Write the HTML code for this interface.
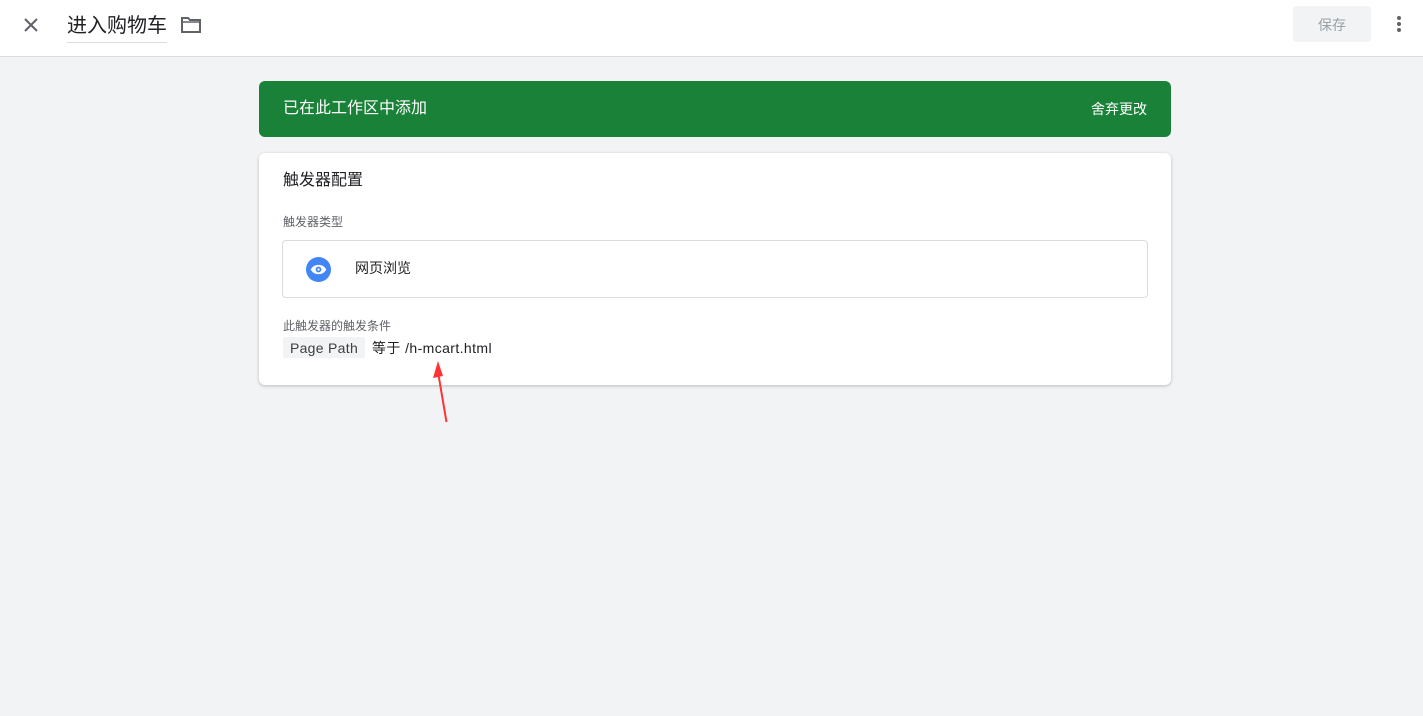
<!DOCTYPE html>
<html><head><meta charset="utf-8"><style>
*{margin:0;padding:0;box-sizing:border-box}
body{width:1423px;height:716px;background:#f1f3f4;font-family:"Liberation Sans","Noto Sans CJK SC",sans-serif;position:relative;overflow:hidden;color:#202124}
.top{position:absolute;left:0;top:0;width:1423px;height:57px;background:#fff;border-bottom:1px solid #dadce0}
.abs{position:absolute}
.banner{position:absolute;left:259px;top:81px;width:912px;height:56px;background:#1a8138;border-radius:6px;color:#fff}
.card{position:absolute;left:259px;top:153px;width:912px;height:232px;background:#fff;border-radius:6px;box-shadow:0 1px 3px rgba(60,64,67,.3)}
</style></head><body>
<div class="top">
<svg class="abs" style="left:23px;top:17px" width="16" height="16" viewBox="0 0 16 16"><path d="M2 2L14 14M14 2L2 14" stroke="#5f6368" stroke-width="2"/></svg>
<div class="abs" style="left:67px;top:13px;font-size:20px;line-height:26px;color:#202124">进入购物车</div>
<div class="abs" style="left:67px;top:42px;width:100px;height:1px;background:#dadce0"></div>
<svg class="abs" style="left:180px;top:15px" width="22" height="20" viewBox="0 0 22 20"><path d="M2 3h6l2 2h10v12H2z" fill="none" stroke="#5f6368" stroke-width="2"/><path d="M2 7h18" stroke="#5f6368" stroke-width="1.5"/></svg>
<div class="abs" style="left:1293px;top:6px;width:78px;height:36px;background:#f1f3f4;border-radius:4px;color:#9aa0a6;font-size:14px;text-align:center;line-height:38px">保存</div>
<div class="abs" style="left:1397px;top:16px;width:4px;height:4px;border-radius:2px;background:#5f6368;box-shadow:0 6px 0 #5f6368,0 12px 0 #5f6368"></div>
</div>
<div class="banner">
<div class="abs" style="left:24px;top:18px;font-size:16px;line-height:20px">已在此工作区中添加</div>
<div class="abs" style="right:24px;top:19px;font-size:14px;line-height:18px">舍弃更改</div>
</div>
<div class="card">
<div class="abs" style="left:24px;top:18px;font-size:16px;line-height:20px">触发器配置</div>
<div class="abs" style="left:24px;top:60px;font-size:12px;color:#5f6368">触发器类型</div>
<div class="abs" style="left:23px;top:87px;width:866px;height:58px;border:1px solid #dadce0;border-radius:4px">
<svg class="abs" style="left:23px;top:16px" width="25" height="25" viewBox="0 0 24 24"><circle cx="12" cy="12" r="12" fill="#4285f4"/><path d="M4.5 12C6.5 8.5 9 7.5 12 7.5S17.5 8.5 19.5 12C17.5 15.5 15 16.5 12 16.5S6.5 15.5 4.5 12z" fill="#fff"/><circle cx="12" cy="12" r="2.8" fill="#4285f4"/><circle cx="12" cy="12" r="1.1" fill="#fff"/></svg>
<div class="abs" style="left:72px;top:18px;font-size:14px;line-height:18px">网页浏览</div>
</div>
<div class="abs" style="left:24px;top:164px;font-size:12px;color:#5f6368">此触发器的触发条件</div>
<div class="abs" style="left:24px;top:184px;height:21px;width:82px;text-align:center;background:#f1f3f4;font-size:14px;line-height:22px;color:#3c4043;border-radius:2px;letter-spacing:.3px">Page Path</div>
<div class="abs" style="left:113px;top:185px;font-size:14px;line-height:20px;letter-spacing:.4px">等于 /h-mcart.html</div>
</div>
<svg class="abs" style="left:430px;top:360px" width="22" height="66" viewBox="0 0 22 66"><path d="M16.5 62L8 12" stroke="#ff3333" stroke-width="2"/><path d="M8 1L3 18L13 16z" fill="#ff3333"/></svg>
</body></html>
